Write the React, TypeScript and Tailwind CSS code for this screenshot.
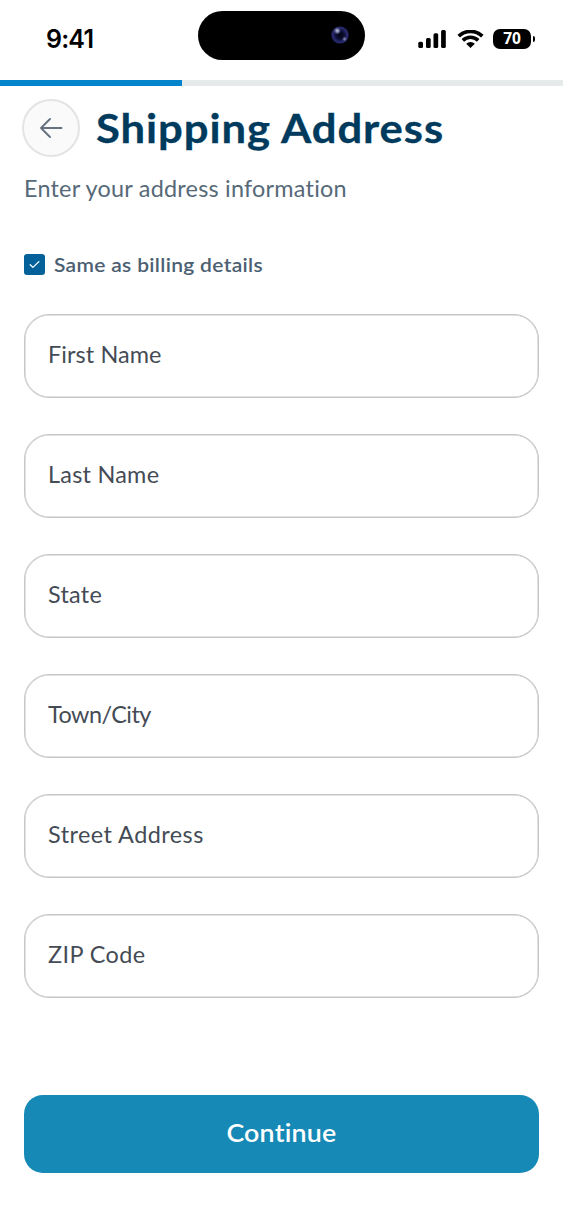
const fields = [
  { name: 'First Name', tracking: 'tracking-[0.1px]' },
  { name: 'Last Name', tracking: 'tracking-[0.25px]' },
  { name: 'State', tracking: 'tracking-[0.25px]' },
  { name: 'Town/City', tracking: 'tracking-[-0.5px]' },
  { name: 'Street Address', tracking: 'tracking-[0.45px]' },
  { name: 'ZIP Code', tracking: 'tracking-[0.4px]' },
];

function StatusBar() {
  return (
    <header className="flex h-[79.5px] shrink-0 pt-[10.5px]">
      <div className="w-[198px] pl-[46px] pt-[10.5px] font-['Inter',sans-serif] text-[25px] font-semibold leading-9 tracking-[-0.8px] text-black">
        9:41
      </div>
      <div className="flex h-[49.5px] w-[167px] items-center justify-end rounded-full bg-black pr-4">
        <svg width="18" height="18" viewBox="0 0 18 18">
          <defs>
            <radialGradient id="lens">
              <stop offset="0" stopColor="#03030c" />
              <stop offset="0.45" stopColor="#0d0e33" />
              <stop offset="0.85" stopColor="#292c73" />
              <stop offset="1" stopColor="#17183f" />
            </radialGradient>
            <radialGradient id="glint">
              <stop offset="0" stopColor="#c5c7df" />
              <stop offset="0.4" stopColor="#8486ac" />
              <stop offset="1" stopColor="#30336f" stopOpacity="0" />
            </radialGradient>
          </defs>
          <circle cx="9" cy="9" r="8.8" fill="url(#lens)" />
          <circle cx="6.3" cy="4.8" r="4" fill="url(#glint)" />
          <circle cx="13.6" cy="13" r="2.8" fill="url(#glint)" opacity="0.65" />
        </svg>
      </div>
      <div className="flex h-14 items-center pl-[53px]">
        <svg width="28" height="18" viewBox="0 0 28 18" fill="#000">
          <rect x="0.3" y="11.8" width="4.7" height="6.2" rx="1.5" />
          <rect x="8" y="8" width="4.7" height="10" rx="1.5" />
          <rect x="15.5" y="3.2" width="4.7" height="14.8" rx="1.5" />
          <rect x="23.1" y="0" width="4.7" height="18" rx="1.5" />
        </svg>
        <svg className="ml-[11px]" width="27" height="18" viewBox="0 0 27 18">
          <g fill="none" stroke="#000" strokeWidth="3.6">
            <path d="M1.7 6.1a17 17 0 0 1 23.6 0" />
            <path d="M5.8 10.4a11.1 11.1 0 0 1 15.4 0" />
          </g>
          <path d="M13.5 18 9.2 13.8a6.1 6.1 0 0 1 8.6 0Z" fill="#000" />
        </svg>
        <div className="ml-[9px] flex h-5 w-[38px] items-center justify-center rounded-[7px] bg-black pb-px font-['Open_Sans',sans-serif] text-[15.5px] font-bold leading-5 text-white">
          70
        </div>
        <div className="ml-[1.5px] mt-px h-[6px] w-[2px] rounded-r-full bg-black" />
      </div>
    </header>
  );
}

export default function App() {
  return (
    <main className="flex h-[1218px] w-[563px] flex-col overflow-hidden bg-white font-['Lato',sans-serif] [font-variant-ligatures:none]">
      <StatusBar />
      <div className="h-[6px] shrink-0 bg-[#e6eaeb]">
        <div className="h-full w-[181.5px] bg-[#0484cb]" />
      </div>
      <div className="flex items-center pl-[22px] pt-[13px]">
        <button aria-label="Back" className="flex size-[58px] items-center justify-center rounded-full border-2 border-[#e4e4e4] bg-[#fafafa]">
          <svg width="24" height="22" viewBox="0 0 24 22" fill="none" stroke="#64717f" strokeWidth="1.9" strokeLinecap="round" strokeLinejoin="round">
            <path d="M22.5 11H2M11 2 2 11l9 9" />
          </svg>
        </button>
        <h1 className="ml-4 origin-left scale-x-[1.09] whitespace-nowrap text-[40px] font-bold leading-[58px] tracking-[0.85px] text-[#003a5d] [-webkit-text-stroke:0.3px_#003a5d]">Shipping Address</h1>
      </div>
      <p className="ml-6 mt-[18px] origin-left scale-x-[1.04] text-[22.5px] leading-7 tracking-[0.22px] text-[#566979]">Enter your address information</p>
      <label className="mt-[48px] flex h-7 items-center gap-[9px] pl-6">
        <span className="flex size-[21px] items-center justify-center rounded-[3px] bg-[#04619a]">
          <svg width="11" height="9" viewBox="0 0 11 9" fill="none" stroke="#fff" strokeWidth="1.3" strokeLinecap="round" strokeLinejoin="round">
            <path d="m1.2 4.8 2.7 2.6 6-5.8" />
          </svg>
        </span>
        <span className="origin-left scale-x-[1.05] whitespace-nowrap pb-px text-[20px] font-semibold leading-7 tracking-[0.3px] text-[#4c6072]">Same as billing details</span>
      </label>
      <form className="mt-[35px] flex w-[515px] flex-col gap-9 pl-6">
        {fields.map(({ name, tracking }) => (
          <div key={name} className="flex h-[84px] w-[514.5px] shrink-0 items-center rounded-[25px] border border-[#c6c6c6] pb-[2px] pl-[23px] shadow-[inset_0_0_0_0.5px_#c6c6c6]">
            <span className={`origin-left scale-x-[1.04] whitespace-nowrap text-[22.5px] leading-7 text-[#444b55] ${tracking}`}>{name}</span>
          </div>
        ))}
      </form>
      <button className="ml-6 mt-[97px] h-[78px] w-[514.5px] shrink-0 rounded-[19px] bg-[#1689b6] pb-[3px] text-[25.5px] font-semibold leading-8 text-white">
        <span className="inline-block scale-x-[1.05] tracking-[0.2px]">Continue</span>
      </button>
    </main>
  );
}
